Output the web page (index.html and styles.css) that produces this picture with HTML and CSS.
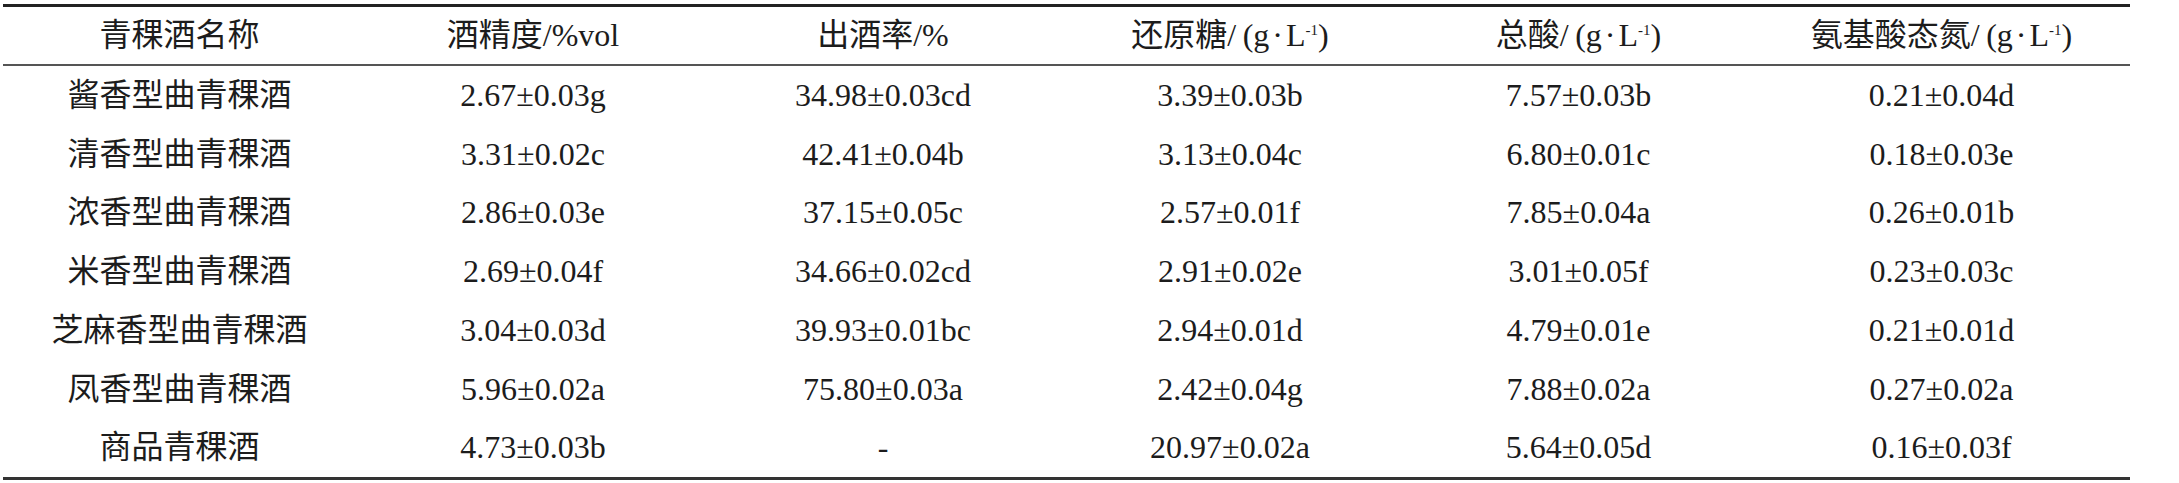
FILE: index.html
```html
<!DOCTYPE html>
<html lang="zh-CN">
<head>
<meta charset="utf-8">
<title>青稞酒理化指标</title>
<link rel="stylesheet" href="styles.css">
</head>
<body>
<div class="wrap">
<table class="data">
  <colgroup>
    <col class="c1"><col class="c2"><col class="c3"><col class="c4"><col class="c5"><col class="c6">
  </colgroup>
  <thead>
    <tr>
      <th>青稞酒名称</th>
      <th>酒精度/%vol</th>
      <th>出酒率/%</th>
      <th>还原糖/&#8201;(g<span class="dot">·</span>L<sup>-1</sup>)</th>
      <th>总酸/&#8201;(g<span class="dot">·</span>L<sup>-1</sup>)</th>
      <th>氨基酸态氮/&#8201;(g<span class="dot">·</span>L<sup>-1</sup>)</th>
    </tr>
  </thead>
  <tbody>
    <tr><td>酱香型曲青稞酒</td><td>2.67±0.03g</td><td>34.98±0.03cd</td><td>3.39±0.03b</td><td>7.57±0.03b</td><td>0.21±0.04d</td></tr>
    <tr><td>清香型曲青稞酒</td><td>3.31±0.02c</td><td>42.41±0.04b</td><td>3.13±0.04c</td><td>6.80±0.01c</td><td>0.18±0.03e</td></tr>
    <tr><td>浓香型曲青稞酒</td><td>2.86±0.03e</td><td>37.15±0.05c</td><td>2.57±0.01f</td><td>7.85±0.04a</td><td>0.26±0.01b</td></tr>
    <tr><td>米香型曲青稞酒</td><td>2.69±0.04f</td><td>34.66±0.02cd</td><td>2.91±0.02e</td><td>3.01±0.05f</td><td>0.23±0.03c</td></tr>
    <tr><td>芝麻香型曲青稞酒</td><td>3.04±0.03d</td><td>39.93±0.01bc</td><td>2.94±0.01d</td><td>4.79±0.01e</td><td>0.21±0.01d</td></tr>
    <tr><td>凤香型曲青稞酒</td><td>5.96±0.02a</td><td>75.80±0.03a</td><td>2.42±0.04g</td><td>7.88±0.02a</td><td>0.27±0.02a</td></tr>
    <tr class="last"><td>商品青稞酒</td><td>4.73±0.03b</td><td>-</td><td>20.97±0.02a</td><td>5.64±0.05d</td><td>0.16±0.03f</td></tr>
  </tbody>
</table>
</div>
</body>
</html>
```

FILE: styles.css
```css
html, body {
  margin: 0;
  padding: 0;
  background: #ffffff;
}

.wrap {
  padding: 4px 0 0 3px;
}

.data {
  width: 2127px;
  table-layout: fixed;
  border-collapse: separate;
  border-spacing: 0;
  font-family: "Liberation Serif", "Noto Sans CJK SC", serif;
  font-size: 32px;
  color: #1c1c1c;
}

.c1 { width: 353px; }
.c2 { width: 354px; }
.c3 { width: 346px; }
.c4 { width: 348px; }
.c5 { width: 349px; }
.c6 { width: 377px; }

.data th,
.data td {
  padding: 0;
  text-align: center;
  font-weight: normal;
  white-space: nowrap;
  vertical-align: top;
}

.data th {
  line-height: 57px;
  border-top: 3px solid #222222;
  border-bottom: 2px solid #555555;
}

.data td {
  line-height: 58.7px;
}

.data tr.last td {
  border-bottom: 3px solid #333333;
}

.dot {
  margin: 0 3px;
}

.data sup {
  font-size: 15px;
  line-height: 0;
  vertical-align: 0.75em;
}
```
